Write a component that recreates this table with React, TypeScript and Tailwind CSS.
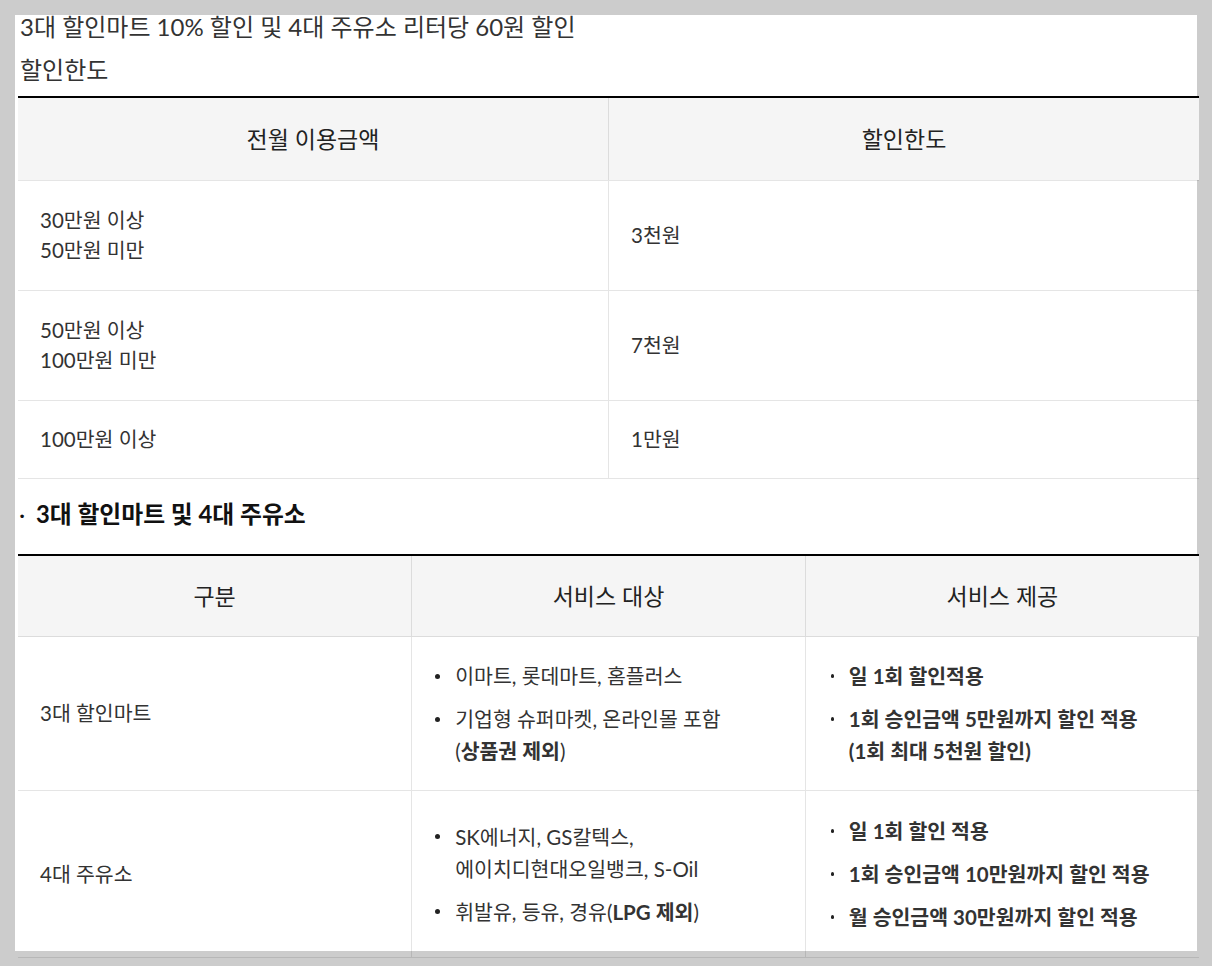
const font = { fontFamily: '"Lato", "Noto Sans CJK KR", sans-serif' };

const limitRows = [
  { lines: ['30만원 이상', '50만원 미만'], value: '3천원', h: 'h-[110px]' },
  { lines: ['50만원 이상', '100만원 미만'], value: '7천원', h: 'h-[110px]' },
  { lines: ['100만원 이상'], value: '1만원', h: 'h-[78px]' },
];

const Dot = ({ big }: { big?: boolean }) => (
  <span className="flex h-[32px] w-[20px] shrink-0 items-center">
    <span className={big ? 'block h-[5px] w-[5px] rounded-full bg-[#222]' : 'ml-[2px] block h-[3.5px] w-[3.5px] rounded-full bg-[#222]'} />
  </span>
);

const Item = ({ children, big }: { children: React.ReactNode; big?: boolean }) => (
  <li className="flex">
    <Dot big={big} />
    <span className="leading-[32px]">{children}</span>
  </li>
);

export default function App() {
  return (
    <div className="h-[966px] w-full overflow-hidden bg-[#cccccc] p-[15px]" style={font}>
      <div className="h-[936px] w-[1182px] bg-white pl-[3px] text-[#333]">
        <p className="pl-[2px] text-[24px] leading-[24px]">3대 할인마트 10% 할인 및 4대 주유소 리터당 60원 할인</p>
        <p className="mt-[19px] pl-[2px] text-[24px] leading-[24px]">할인한도</p>

        <table className="mt-[14px] w-[1181px] table-fixed border-collapse border-t-2 border-black text-[20.5px]">
          <thead>
            <tr className="bg-[#f5f5f5]">
              <th className="h-[83px] border-b border-black/10 text-center align-middle text-[23px] font-normal text-[#222]">전월 이용금액</th>
              <th className="h-[83px] border-b border-l border-black/10 text-center align-middle text-[23px] font-normal text-[#222]">할인한도</th>
            </tr>
          </thead>
          <tbody>
            {limitRows.map((r) => (
              <tr key={r.value}>
                <td className={`${r.h} border-b border-black/10 pl-[22px] align-middle leading-[30px]`}>
                  {r.lines.map((l) => (
                    <div key={l}>{l}</div>
                  ))}
                </td>
                <td className={`${r.h} border-b border-l border-black/10 pl-[22px] align-middle leading-[30px]`}>{r.value}</td>
              </tr>
            ))}
          </tbody>
        </table>

        <p className="mt-[20px] flex text-[23.8px] font-bold leading-[30px] text-[#111]">
          <span className="w-[18px] pl-[1px] font-normal">·</span>
          <span>3대 할인마트 및 4대 주유소</span>
        </p>

        <table className="mt-[25px] w-[1181px] table-fixed border-collapse border-t-2 border-black text-[20.5px]">
          <thead>
            <tr className="bg-[#f5f5f5]">
              <th className="h-[82px] border-b border-black/10 text-center align-middle text-[23px] font-normal text-[#222]">구분</th>
              <th className="h-[82px] border-b border-l border-black/10 text-center align-middle text-[23px] font-normal text-[#222]">서비스 대상</th>
              <th className="h-[82px] border-b border-l border-black/10 text-center align-middle text-[23px] font-normal text-[#222]">서비스 제공</th>
            </tr>
          </thead>
          <tbody>
            <tr>
              <td className="border-b border-black/10 pl-[22px] align-middle">3대 할인마트</td>
              <td className="border-b border-l border-black/10 py-[23px] pl-[23px] align-middle">
                <ul className="flex flex-col gap-[11px]">
                  <Item big>이마트, 롯데마트, 홈플러스</Item>
                  <Item big>
                    기업형 슈퍼마켓, 온라인몰 포함
                    <br />(<b>상품권 제외</b>)
                  </Item>
                </ul>
              </td>
              <td className="border-b border-l border-black/10 py-[23px] pl-[23px] align-middle font-bold">
                <ul className="flex flex-col gap-[11px]">
                  <Item>일 1회 할인적용</Item>
                  <Item>
                    1회 승인금액 5만원까지 할인 적용
                    <br />
                    (1회 최대 5천원 할인)
                  </Item>
                </ul>
              </td>
            </tr>
            <tr>
              <td className="border-b border-black/10 pl-[22px] align-middle">4대 주유소</td>
              <td className="border-b border-l border-black/10 py-[24px] pl-[23px] align-middle">
                <ul className="flex flex-col gap-[11px]">
                  <Item big>
                    SK에너지, GS칼텍스,
                    <br />
                    에이치디현대오일뱅크, S-Oil
                  </Item>
                  <Item big>
                    휘발유, 등유, 경유(<b>LPG 제외</b>)
                  </Item>
                </ul>
              </td>
              <td className="border-b border-l border-black/10 py-[24px] pl-[23px] align-middle font-bold">
                <ul className="flex flex-col gap-[11px]">
                  <Item>일 1회 할인 적용</Item>
                  <Item>1회 승인금액 10만원까지 할인 적용</Item>
                  <Item>월 승인금액 30만원까지 할인 적용</Item>
                </ul>
              </td>
            </tr>
          </tbody>
        </table>
      </div>
    </div>
  );
}
